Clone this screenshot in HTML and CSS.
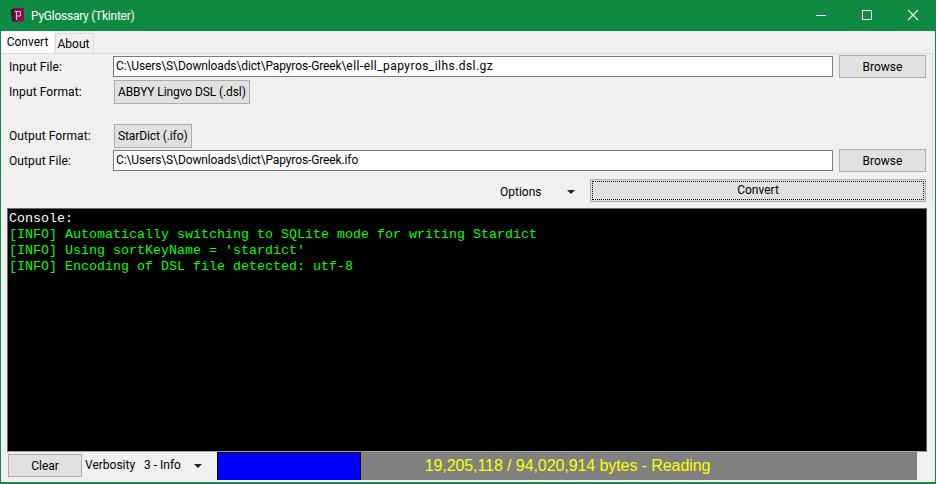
FILE: index.html
```html
<!DOCTYPE html>
<html lang="en">
<head>
<meta charset="utf-8">
<title>PyGlossary (Tkinter)</title>
<link rel="stylesheet" href="styles.css">
</head>
<body>
<div class="window">
  <header class="titlebar">
    <svg class="app-icon" width="16" height="17" viewBox="0 0 16 17">
      <path d="M0.5 3 L4 1 L6 15 L2 14 Z" fill="#2a2226"/>
      <path d="M4 1 H14 V14 L6 15 L4 12 Z" fill="#8d0a4e"/>
      <path d="M6.5 13 V4.5 M5 4.5 H10.5 V9 H6.5" fill="none" stroke="#f0c4d8" stroke-width="1"/>
    </svg>
    <span class="title">PyGlossary (Tkinter)</span>
    <div class="controls">
      <svg class="ctl" width="46" height="31" viewBox="0 0 46 31"><path d="M18 15.5 H28" stroke="#fff" stroke-width="1"/></svg>
      <svg class="ctl" width="46" height="31" viewBox="0 0 46 31"><rect x="18.5" y="10.5" width="9" height="9" fill="none" stroke="#fff"/></svg>
      <svg class="ctl" width="46" height="31" viewBox="0 0 46 31"><path d="M18 10 L28 20 M28 10 L18 20" stroke="#fff" stroke-width="1.1"/></svg>
    </div>
  </header>
  <main class="content">
    <nav class="tabs">
      <div class="tab tab-active">Convert</div>
      <div class="tab">About</div>
    </nav>
    <section class="panel">
      <div class="row row-file row-input">
        <label class="lbl">Input File:</label>
        <div class="entry">C:\Users\S\Downloads\dict\Papyros-Greek\<span class="wide">ell-ell_papyros_ilhs.dsl.gz</span></div>
        <button class="btn btn-browse">Browse</button>
      </div>
      <div class="row row-format">
        <label class="lbl">Input Format:</label>
        <button class="btn btn-format">ABBYY Lingvo DSL (.dsl)</button>
      </div>
      <div class="row row-format row-outfmt">
        <label class="lbl">Output Format:</label>
        <button class="btn btn-format">StarDict (.ifo)</button>
      </div>
      <div class="row row-file row-output">
        <label class="lbl">Output File:</label>
        <div class="entry">C:\Users\S\Downloads\dict\Papyros-Greek.ifo</div>
        <button class="btn btn-browse">Browse</button>
      </div>
      <div class="row row-actions">
        <span class="opt">Options</span>
        <span class="arrow arrow-opt"></span>
        <button class="btn btn-convert"><span class="focus">Convert</span></button>
      </div>
    </section>
    <pre class="console"><span class="c-white">Console:</span>
<span class="c-green">[INFO] Automatically switching to SQLite mode for writing Stardict
[INFO] Using sortKeyName = 'stardict'
[INFO] Encoding of DSL file detected: utf-8</span></pre>
    <footer class="status">
      <button class="btn btn-clear">Clear</button>
      <span class="verb">Verbosity</span>
      <span class="verb-val">3 - Info</span>
      <span class="arrow arrow-verb"></span>
      <div class="progress">
        <div class="bar"></div>
        <div class="bar-text">19,205,118 / 94,020,914 bytes - Reading</div>
      </div>
    </footer>
  </main>
</div>
</body>
</html>
```
FILE: styles.css
```css
* { box-sizing: border-box; }
html, body { margin: 0; padding: 0; }
body { width: 936px; height: 484px; overflow: hidden; font-family: "Roboto", "Noto Sans", sans-serif; font-size: 12px; color: #000; }
.window { width: 936px; height: 484px; display: flex; flex-direction: column; background: #0f8a42; padding: 0 1px 2px 1px; }
.titlebar { height: 31px; flex: none; display: flex; align-items: center; color: #fff; margin: 0 -1px; }
.app-icon { margin-left: 10px; flex: none; }
.title { margin-left: 5px; font-size: 12px; letter-spacing: -0.25px; }
.controls { margin-left: auto; display: flex; }
.ctl { display: block; }
.content { flex: 1; display: flex; flex-direction: column; background: #f0f0f0; border-bottom: 1px solid #fff; min-height: 0; }
.tabs { height: 22px; flex: none; display: flex; align-items: flex-end; }
.tab { height: 20px; width: 39px; border: 1px solid #d9d9d9; border-bottom: none; line-height: 20px; text-align: center; background: #f0f0f0; padding-right: 2px; }
.tab-active { height: 22px; width: 53px; background: #fff; border: none; line-height: 22px; margin-right: 1px; padding-right: 0; }
.panel { height: 149px; flex: none; border-top: 1px solid #d9d9d9; border-right: 1px solid #d9d9d9; margin-right: 2px; padding: 1px 0 0 0; display: flex; flex-direction: column; }
.row { display: flex; align-items: center; }
.lbl { width: 112px; padding-left: 8px; flex: none; letter-spacing: 0.1px; }
.entry { width: 720px; height: 21px; background: #fff; border: 1px solid #7a7a7a; padding-left: 2px; line-height: 19px; white-space: nowrap; flex: none; letter-spacing: -0.12px; }
.wide { letter-spacing: 0.45px; }
.btn { font: inherit; color: #000; background: #e1e1e1; border: 1px solid #adadad; padding: 0; border-radius: 0; display: block; }
.btn-browse { width: 87px; height: 23px; margin-left: 6px; flex: none; }
.row-file { height: 23px; }
.btn-format { height: 24px; padding: 0 3px; margin-left: 1px; letter-spacing: -0.1px; }
.row-format { height: 24px; margin-top: 2px; }
.row-outfmt { margin-top: 20px; }
.row-output { margin-top: 1px; }
.row-actions { height: 23px; margin-top: 7px; }
.opt { margin-left: 499px; width: 66px; padding-top: 2px; }
.arrow { width: 0; height: 0; border-left: 4px solid transparent; border-right: 4px solid transparent; border-top: 4px solid #222; display: block; flex: none; }
.arrow-opt { margin-left: 1px; margin-top: 2px; }
.btn-convert { width: 336px; height: 23px; margin-left: 15px; padding: 1px; flex: none; }
.focus { display: block; height: 19px; line-height: 17px; border: 1px dotted #000; }
.console { margin: 6px 8px 0 6px; flex: none; width: 920px; height: 244px; background: #000; border: 1px solid #696969; border-bottom-color: #a0a0a0; padding: 2px 1px; font-family: "Liberation Mono", monospace; font-size: 13.33px; line-height: 16px; overflow: hidden; }
.c-white { color: #fff; }
.c-green { color: #00ff00; }
.status { flex: 1; display: flex; align-items: flex-start; min-height: 0; }
.btn-clear { width: 74px; height: 23px; margin: 2px 0 0 7px; flex: none; }
.verb { margin: 6px 0 0 3px; width: 59px; flex: none; }
.verb-val { margin-top: 6px; width: 50px; flex: none; }
.arrow-verb { margin-top: 12px; }
.progress { margin-left: 15px; width: 700px; height: 28px; position: relative; background: #808080; }
.bar { width: 144px; height: 28px; background: #0000ff; border: 1px solid #000; border-bottom: none; }
.bar-text { position: absolute; inset: 0; text-align: center; color: #ffff00; font-family: "Liberation Sans", sans-serif; font-size: 16px; letter-spacing: -0.08px; line-height: 28px; padding-left: 1px; }
```
